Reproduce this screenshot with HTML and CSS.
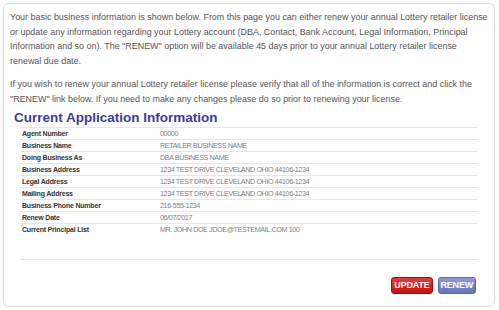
FILE: index.html
```html
<!DOCTYPE html>
<html lang="en">
<head>
    <meta charset="UTF-8">
    <title>Current Application Information</title>
    <link rel="stylesheet" href="styles.css">
</head>
<body>
    <div class="panel">
        <p class="intro">Your basic business information is shown below. From this page you can either renew your annual Lottery retailer license or update any information regarding your Lottery account (DBA, Contact, Bank Account, Legal Information, Principal Information and so on). The "RENEW" option will be available 45 days prior to your annual Lottery retailer license renewal due date.</p>
        <p class="intro">If you wish to renew your annual Lottery retailer license please verify that all of the information is correct and click the "RENEW" link below. If you need to make any changes please do so prior to renewing your license.</p>

        <h2>Current Application Information</h2>
        <table class="info-table">
            <tr><th>Agent Number</th><td>00000</td></tr>
            <tr><th>Business Name</th><td>RETAILER BUSINESS NAME</td></tr>
            <tr><th>Doing Business As</th><td>DBA BUSINESS NAME</td></tr>
            <tr><th>Business Address</th><td>1234 TEST DRIVE CLEVELAND OHIO 44106-1234</td></tr>
            <tr><th>Legal Address</th><td>1234 TEST DRIVE CLEVELAND OHIO 44106-1234</td></tr>
            <tr><th>Mailing Address</th><td>1234 TEST DRIVE CLEVELAND OHIO 44106-1234</td></tr>
            <tr><th>Business Phone Number</th><td>216-555-1234</td></tr>
            <tr><th>Renew Date</th><td>06/07/2017</td></tr>
            <tr class="tall"><th>Current Principal List</th><td>MR. JOHN DOE JDOE@TESTEMAIL.COM 100</td></tr>
        </table>

        <div class="actions">
            <button class="btn btn-update">UPDATE</button>
            <button class="btn btn-renew">RENEW</button>
        </div>
    </div>
</body>
</html>
```

FILE: styles.css
```css
body {
    margin: 0;
    font-family: "Liberation Sans", Arial, sans-serif;
    background: #fff;
}

.panel {
    box-sizing: border-box;
    margin: 3px 4px 0 3px;
    height: 304px;
    border: 1px solid #dcdcdc;
    border-radius: 6px;
    padding: 6px 4px 0 6px;
    box-shadow: 0 1px 2px rgba(0, 0, 0, 0.06);
}

.intro {
    margin: 0 0 8.6px 0;
    font-size: 8.95px;
    line-height: 14.6px;
    color: #555;
}

h2 {
    margin: -5px 0 0 4px;
    font-size: 13.5px;
    line-height: 16px;
    color: #3d3a9c;
}

.info-table {
    margin: 1px 0 0 10px;
    width: 458px;
    border-collapse: collapse;
    border-top: 1px solid #e6e6e6;
}

.info-table th,
.info-table td {
    padding: 0 0 0 2px;
    height: 11px;
    line-height: 11px;
    vertical-align: top;
    text-align: left;
    border-bottom: 1px solid #e6e6e6;
    white-space: nowrap;
}

.info-table th {
    width: 136px;
    font-size: 7px;
    letter-spacing: -0.2px;
    color: #333;
}

.info-table td {
    font-size: 7.2px;
    letter-spacing: -0.4px;
    font-weight: normal;
    color: #808080;
}

.info-table .tall th,
.info-table .tall td {
    height: 35px;
}

.actions {
    display: flex;
    justify-content: flex-end;
    gap: 5px;
    margin: 17px 14px 0 0;
}

.btn {
    height: 17px;
    padding: 0 2px;
    border-radius: 3px;
    font-family: "Liberation Sans", Arial, sans-serif;
    font-size: 9px;
    font-weight: bold;
    letter-spacing: -0.2px;
    color: #fff;
    cursor: pointer;
}

.btn-update {
    border: 1px solid #a50d0d;
    background: linear-gradient(#e83a3a, #c81010);
}

.btn-renew {
    border: 1px solid #5b67a8;
    background: linear-gradient(#8c9bd8, #6474bd);
}
```
